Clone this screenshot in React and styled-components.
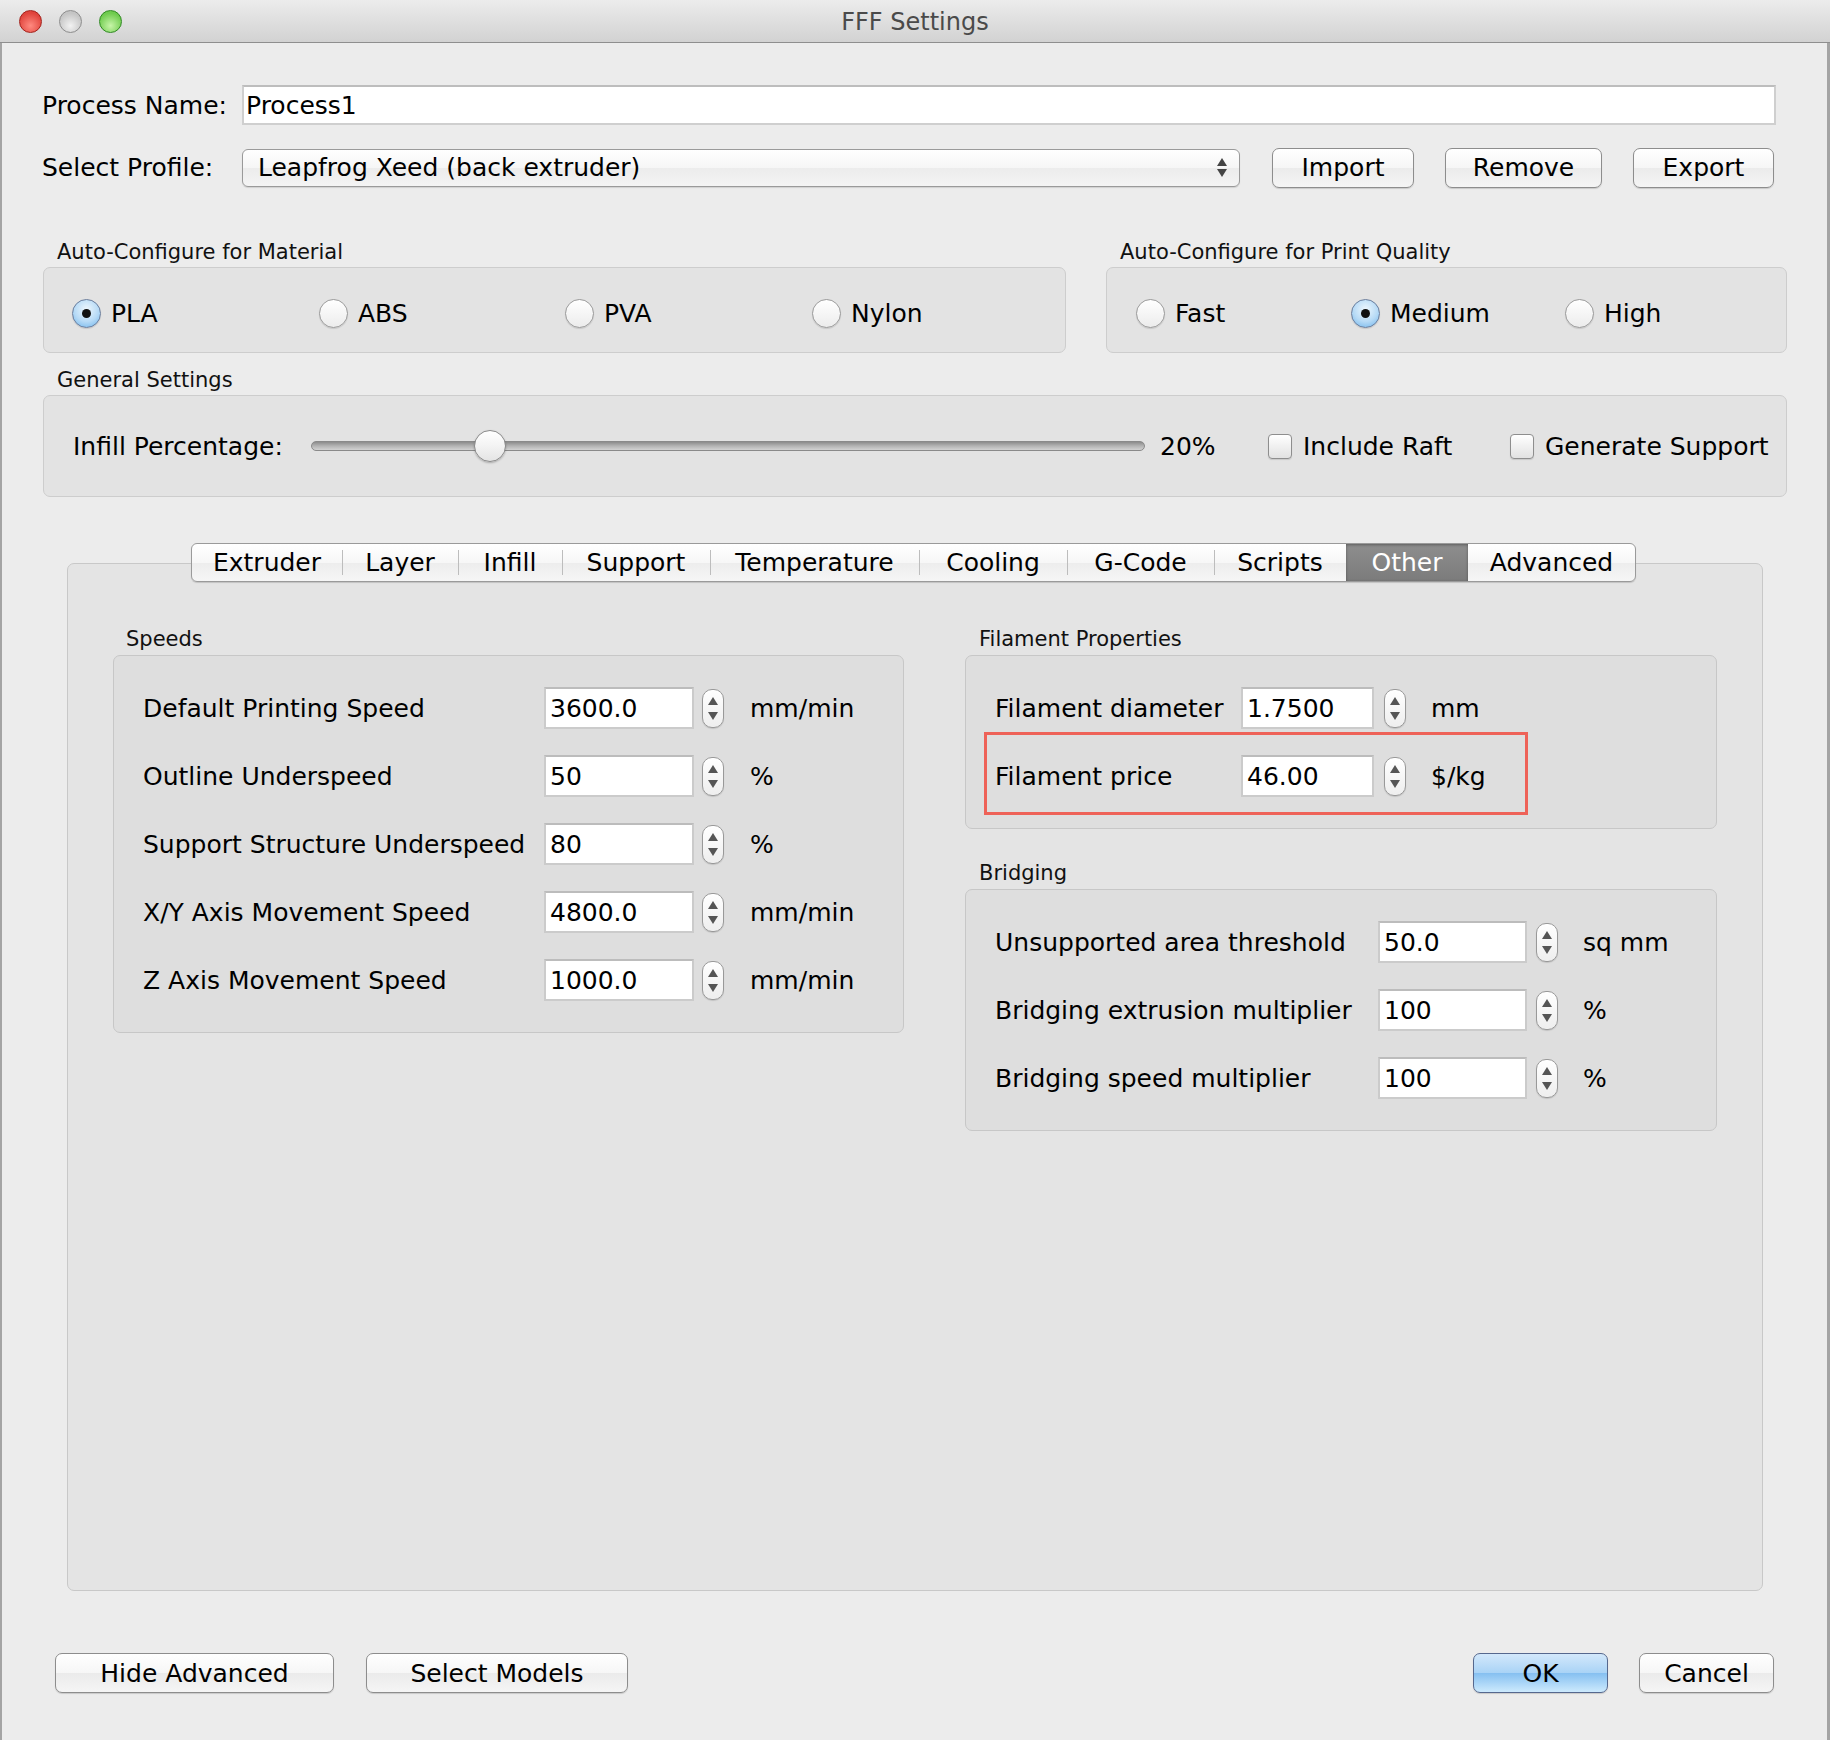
import React from 'react';
import styled, { createGlobalStyle, css } from 'styled-components';

const GlobalStyle = createGlobalStyle`
  html, body {
    margin: 0;
    padding: 0;
    background: #ececec;
  }
  body {
    font-family: "DejaVu Sans", "Liberation Sans", sans-serif;
    color: #000;
  }
`;

const Window = styled.div`
  width: 1830px;
  height: 1740px;
  box-sizing: border-box;
  background: #ececec;
  box-shadow: inset 2px 0 0 #a4a4a4, inset -3px 0 0 #a4a4a4;
  display: flex;
  flex-direction: column;
  overflow: hidden;
`;

const TitleBar = styled.div`
  height: 43px;
  flex: none;
  box-sizing: border-box;
  border-bottom: 1px solid #8e8e8e;
  background: linear-gradient(#ececec, #d2d2d2);
  display: grid;
  grid-template-columns: 1fr auto 1fr;
  align-items: center;
`;

const Lights = styled.div`
  display: flex;
  gap: 17px;
  padding-left: 19px;
`;

const lightColors = {
  red: ['#ff8a80', '#e0443c', '#a3201a'],
  gray: ['#f2f2f2', '#c4c4c4', '#8d8d8d'],
  green: ['#c7f5a8', '#6fcb4e', '#2f8a22'],
};

const Light = styled.span`
  width: 23px;
  height: 23px;
  border-radius: 50%;
  box-sizing: border-box;
  border: 1px solid ${p => lightColors[p.$c][2]};
  background: radial-gradient(circle at 50% 70%, ${p => lightColors[p.$c][0]} 0%, ${p => lightColors[p.$c][1]} 70%);
`;

const Title = styled.div`
  font-size: 24px;
  color: #4a4a4a;
  padding-top: 2px;
`;

const FormRow = styled.div`
  display: flex;
  flex: none;
  align-items: center;
  height: ${p => p.$h}px;
  margin: ${p => p.$top}px 54px 0 42px;
`;

const FieldLabel = styled.div`
  width: 200px;
  flex: none;
  font-size: 25px;
`;

const TextField = styled.div`
  flex: 1;
  height: 40px;
  box-sizing: border-box;
  background: #fff;
  border: 2px solid #cfcfcf;
  border-top-color: #bdbdbd;
  padding-left: 2px;
  display: flex;
  align-items: center;
  font-size: 25px;
`;

const Combo = styled.div`
  width: 998px;
  height: 38px;
  box-sizing: border-box;
  border: 1px solid #9a9a9a;
  border-radius: 6px;
  background: linear-gradient(#ffffff, #f6f6f6 50%, #ececec 51%, #f4f4f4);
  box-shadow: 0 1px 1px rgba(0, 0, 0, 0.12);
  display: flex;
  align-items: center;
  justify-content: space-between;
  padding: 0 12px 0 15px;
  font-size: 25px;
`;

const ComboArrows = styled.span`
  display: flex;
  flex-direction: column;
  gap: 3px;
  align-items: center;
`;

const TriUp = styled.span`
  width: 0;
  height: 0;
  border-left: ${p => p.$s || 4}px solid transparent;
  border-right: ${p => p.$s || 4}px solid transparent;
  border-bottom: ${p => (p.$s || 4) + 3}px solid ${p => p.$c || '#5a5a5a'};
`;

const TriDown = styled.span`
  width: 0;
  height: 0;
  border-left: ${p => p.$s || 4}px solid transparent;
  border-right: ${p => p.$s || 4}px solid transparent;
  border-top: ${p => (p.$s || 4) + 3}px solid ${p => p.$c || '#5a5a5a'};
`;

const Button = styled.button`
  width: ${p => p.$w}px;
  height: 40px;
  margin-left: ${p => p.$ml || 0}px;
  padding: 0;
  flex: none;
  font-family: "DejaVu Sans", "Liberation Sans", sans-serif;
  font-size: 25px;
  color: #000;
  border: 1px solid #8d8d8d;
  border-radius: 7px;
  background: linear-gradient(#ffffff, #f6f6f6 50%, #ebebeb 51%, #f5f5f5);
  box-shadow: 0 1px 1px rgba(0, 0, 0, 0.15);
  ${p => p.$primary && css`
    border-color: #56688e;
    background: linear-gradient(#d3e8fb, #a9d3f6 50%, #86c0f1 51%, #cdeafd);
  `}
`;

const GroupsRow = styled.div`
  display: flex;
  flex: none;
  gap: 40px;
  margin: 52px 43px 0 43px;
`;

const Group = styled.div`
  display: flex;
  flex-direction: column;
  width: ${p => (p.$w ? `${p.$w}px` : 'auto')};
  flex: ${p => (p.$grow ? '1' : 'none')};
  margin: ${p => p.$m || 0};
`;

const GroupLabel = styled.div`
  height: 24px;
  line-height: 24px;
  font-size: 21px;
  color: #111;
  padding-left: ${p => p.$pl || 14}px;
  margin-top: ${p => p.$mt || 0}px;
`;

const GroupBox = styled.div`
  margin-top: 3px;
  height: ${p => p.$h}px;
  box-sizing: border-box;
  background: #e3e3e3;
  border: 1px solid #cdcdcd;
  border-radius: 7px;
  display: flex;
  align-items: center;
  padding-left: ${p => p.$pl}px;
`;

const Option = styled.label`
  width: ${p => p.$w}px;
  display: flex;
  align-items: center;
  gap: 10px;
  font-size: 25px;
  padding-top: 6px;
`;

const Radio = styled.span`
  width: 29px;
  height: 29px;
  flex: none;
  box-sizing: border-box;
  border-radius: 50%;
  border: 1px solid #9a9a9a;
  background: linear-gradient(#ffffff, #ececec);
  box-shadow: 0 1px 1px rgba(0, 0, 0, 0.12);
  display: flex;
  align-items: center;
  justify-content: center;
  ${p => p.$on && css`
    border-color: #6a7d9c;
    background: radial-gradient(circle at 50% 35%, #eef7fd 0%, #b6daf6 55%, #8cc4f0 80%, #c8e4fa 100%);
    &::after {
      content: '';
      width: 9px;
      height: 9px;
      border-radius: 50%;
      background: #111;
    }
  `}
`;

const InfillLabel = styled.div`
  width: 238px;
  flex: none;
  font-size: 25px;
`;

const Slider = styled.div`
  position: relative;
  width: 834px;
  height: 32px;
  flex: none;
  display: flex;
  align-items: center;
`;

const Track = styled.div`
  width: 100%;
  height: 10px;
  box-sizing: border-box;
  border: 1px solid #8a8a8a;
  border-radius: 5px;
  background: linear-gradient(#8c8c8c, #b4b4b4 50%, #d2d2d2);
`;

const Thumb = styled.div`
  position: absolute;
  top: 0;
  left: ${p => p.$x}px;
  width: 32px;
  height: 32px;
  box-sizing: border-box;
  border-radius: 50%;
  border: 1px solid #8a8a8a;
  background: linear-gradient(#ffffff, #f3f3f3 50%, #e4e4e4);
  box-shadow: 0 1px 2px rgba(0, 0, 0, 0.25);
`;

const Pct = styled.div`
  width: 123px;
  flex: none;
  padding-left: 15px;
  box-sizing: border-box;
  font-size: 25px;
`;

const CheckItem = styled.label`
  width: ${p => (p.$w ? `${p.$w}px` : 'auto')};
  flex: none;
  display: flex;
  align-items: center;
  gap: 11px;
  font-size: 25px;
`;

const Checkbox = styled.span`
  width: 24px;
  height: 25px;
  box-sizing: border-box;
  border: 1px solid #8e8e8e;
  border-radius: 4px;
  background: linear-gradient(#ffffff, #f0f0f0 50%, #e2e2e2);
  box-shadow: 0 1px 1px rgba(0, 0, 0, 0.12);
`;

const TabStrip = styled.div`
  position: relative;
  z-index: 1;
  flex: none;
  align-self: flex-start;
  margin: 46px 0 0 191px;
  height: 39px;
  box-sizing: border-box;
  display: flex;
  border: 1px solid #9a9a9a;
  border-radius: 6px;
  overflow: hidden;
  background: linear-gradient(#ffffff, #f7f7f7 50%, #ededed 51%, #f6f6f6);
  box-shadow: 0 1px 1px rgba(0, 0, 0, 0.15);
`;

const Tab = styled.div`
  width: ${p => p.$w}px;
  box-sizing: border-box;
  display: flex;
  align-items: center;
  justify-content: center;
  font-size: 25px;
  position: relative;
  ${p => p.$sep && css`
    &::before {
      content: '';
      position: absolute;
      left: 0;
      top: 6px;
      bottom: 6px;
      width: 1px;
      background: #bdbdbd;
    }
  `}
  ${p => p.$active && css`
    color: #fff;
    background: linear-gradient(#8e8e8e, #7b7b7b);
    box-shadow: inset 0 1px 3px rgba(0, 0, 0, 0.35);
  `}
`;

const Panel = styled.div`
  flex: none;
  margin: -19px 67px 0 67px;
  height: 1028px;
  box-sizing: border-box;
  background: #e4e4e4;
  border: 1px solid #c8c8c8;
  border-radius: 7px;
  padding: 63px 45px 0 45px;
  display: flex;
  gap: 61px;
  align-items: flex-start;
`;

const Column = styled.div`
  width: ${p => p.$w}px;
  flex: none;
  display: flex;
  flex-direction: column;
`;

const SubBox = styled.div`
  margin-top: 4px;
  box-sizing: border-box;
  background: #dedede;
  border: 1px solid #c7c7c7;
  border-radius: 7px;
  padding: 18px 0 18px 29px;
  display: flex;
  flex-direction: column;
`;

const FieldRow = styled.div`
  height: 68px;
  display: flex;
  align-items: center;
`;

const RowLabel = styled.div`
  width: ${p => p.$w}px;
  flex: none;
  font-size: 25px;
`;

const NumField = styled.div`
  width: ${p => p.$w}px;
  height: 42px;
  flex: none;
  box-sizing: border-box;
  background: #fff;
  border: 2px solid #cbcbcb;
  border-top-color: #bcbcbc;
  padding-left: 4px;
  display: flex;
  align-items: center;
  font-size: 25px;
`;

const Spinner = styled.div`
  width: 22px;
  height: 39px;
  flex: none;
  margin-left: ${p => p.$ml}px;
  box-sizing: border-box;
  border: 1px solid #999;
  border-radius: 10px;
  background: linear-gradient(#ffffff, #eeeeee);
  box-shadow: 0 1px 1px rgba(0, 0, 0, 0.12);
  display: flex;
  flex-direction: column;
  align-items: center;
  justify-content: space-between;
  padding: 7px 0;
`;

const Unit = styled.div`
  margin-left: ${p => p.$ml}px;
  font-size: 25px;
`;

const Highlight = styled.div`
  width: 544px;
  box-sizing: border-box;
  margin: -10px 0 -5px -11px;
  padding: 7px 0 2px 8px;
  border: 3px solid #ee6258;
`;

const ButtonBar = styled.div`
  display: flex;
  flex: none;
  margin: 62px 56px 0 55px;
`;

const Spacer = styled.div`
  flex: 1;
`;

const speeds = [
  ['Default Printing Speed', '3600.0', 'mm/min'],
  ['Outline Underspeed', '50', '%'],
  ['Support Structure Underspeed', '80', '%'],
  ['X/Y Axis Movement Speed', '4800.0', 'mm/min'],
  ['Z Axis Movement Speed', '1000.0', 'mm/min'],
];

const bridging = [
  ['Unsupported area threshold', '50.0', 'sq mm'],
  ['Bridging extrusion multiplier', '100', '%'],
  ['Bridging speed multiplier', '100', '%'],
];

const tabs = [
  ['Extruder', 150], ['Layer', 116], ['Infill', 104], ['Support', 148],
  ['Temperature', 209], ['Cooling', 148], ['G-Code', 147], ['Scripts', 132],
  ['Other', 122], ['Advanced', 167],
];

function SpinField({ label, labelW, value, fieldW, spinMl, unit, unitMl }) {
  return (
    <FieldRow>
      <RowLabel $w={labelW}>{label}</RowLabel>
      <NumField $w={fieldW}>{value}</NumField>
      <Spinner $ml={spinMl}>
        <TriUp $s={5} $c="#555" />
        <TriDown $s={5} $c="#555" />
      </Spinner>
      <Unit $ml={unitMl}>{unit}</Unit>
    </FieldRow>
  );
}

export default function App() {
  const infill = 20;
  const thumbX = Math.round((infill / 100) * (834 - 32)) + 3;
  const active = 'Other';
  const activeIdx = tabs.findIndex(([name]) => name === active);

  return (
    <Window>
      <GlobalStyle />
      <TitleBar>
        <Lights>
          <Light $c="red" />
          <Light $c="gray" />
          <Light $c="green" />
        </Lights>
        <Title>FFF Settings</Title>
        <div />
      </TitleBar>

      <FormRow $top={42} $h={40}>
        <FieldLabel>Process Name:</FieldLabel>
        <TextField>Process1</TextField>
      </FormRow>

      <FormRow $top={22} $h={41}>
        <FieldLabel>Select Profile:</FieldLabel>
        <Combo>
          <span>Leapfrog Xeed (back extruder)</span>
          <ComboArrows>
            <TriUp $s={5} $c="#444" />
            <TriDown $s={5} $c="#444" />
          </ComboArrows>
        </Combo>
        <Button $w={142} $ml={32}>Import</Button>
        <Button $w={157} $ml={31}>Remove</Button>
        <Button $w={141} $ml={31}>Export</Button>
      </FormRow>

      <GroupsRow>
        <Group $w={1023}>
          <GroupLabel>Auto-Configure for Material</GroupLabel>
          <GroupBox $h={86} $pl={28}>
            <Option $w={247}><Radio $on />PLA</Option>
            <Option $w={246}><Radio />ABS</Option>
            <Option $w={247}><Radio />PVA</Option>
            <Option $w={200}><Radio />Nylon</Option>
          </GroupBox>
        </Group>
        <Group $grow>
          <GroupLabel>Auto-Configure for Print Quality</GroupLabel>
          <GroupBox $h={86} $pl={29}>
            <Option $w={215}><Radio />Fast</Option>
            <Option $w={214}><Radio $on />Medium</Option>
            <Option $w={150}><Radio />High</Option>
          </GroupBox>
        </Group>
      </GroupsRow>

      <Group $m="15px 43px 0 43px">
        <GroupLabel>General Settings</GroupLabel>
        <GroupBox $h={102} $pl={29}>
          <InfillLabel>Infill Percentage:</InfillLabel>
          <Slider>
            <Track />
            <Thumb $x={thumbX} />
          </Slider>
          <Pct>{infill}%</Pct>
          <CheckItem $w={242}><Checkbox />Include Raft</CheckItem>
          <CheckItem><Checkbox />Generate Support</CheckItem>
        </GroupBox>
      </Group>

      <TabStrip>
        {tabs.map(([name, w], i) => (
          <Tab
            key={name}
            $w={w}
            $active={i === activeIdx}
            $sep={i > 0 && i !== activeIdx && i !== activeIdx + 1}
          >
            {name}
          </Tab>
        ))}
      </TabStrip>

      <Panel>
        <Column $w={791}>
          <GroupLabel $pl={13}>Speeds</GroupLabel>
          <SubBox>
            {speeds.map(([label, value, unit]) => (
              <SpinField
                key={label}
                label={label}
                labelW={401}
                value={value}
                fieldW={150}
                spinMl={8}
                unit={unit}
                unitMl={26}
              />
            ))}
          </SubBox>
        </Column>

        <Column $w={752}>
          <GroupLabel $pl={14}>Filament Properties</GroupLabel>
          <SubBox>
            <SpinField label="Filament diameter" labelW={246} value="1.7500" fieldW={133} spinMl={10} unit="mm" unitMl={25} />
            <Highlight>
              <SpinField label="Filament price" labelW={246} value="46.00" fieldW={133} spinMl={10} unit="$/kg" unitMl={25} />
            </Highlight>
          </SubBox>

          <GroupLabel $pl={14} $mt={32}>Bridging</GroupLabel>
          <SubBox>
            {bridging.map(([label, value, unit]) => (
              <SpinField
                key={label}
                label={label}
                labelW={383}
                value={value}
                fieldW={149}
                spinMl={9}
                unit={unit}
                unitMl={25}
              />
            ))}
          </SubBox>
        </Column>
      </Panel>

      <ButtonBar>
        <Button $w={279}>Hide Advanced</Button>
        <Button $w={262} $ml={32}>Select Models</Button>
        <Spacer />
        <Button $w={135} $primary>OK</Button>
        <Button $w={135} $ml={31}>Cancel</Button>
      </ButtonBar>
    </Window>
  );
}
